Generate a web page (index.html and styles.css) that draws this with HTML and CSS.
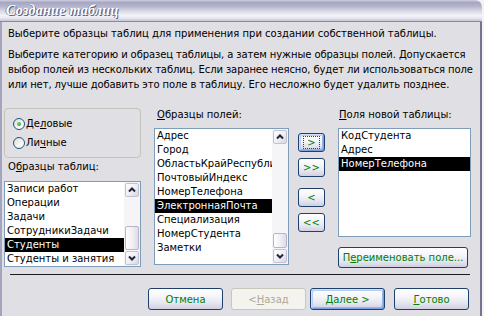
FILE: index.html
```html
<!DOCTYPE html>
<html lang="ru">
<head>
    <meta charset="UTF-8">
    <title>Создание таблиц</title>
    <link rel="stylesheet" href="styles.css">
</head>
<body>
    <div class="window">
        <div class="titlebar">
            <span class="title">Создание таблиц</span>
        </div>

        <div class="frame">
            <p class="intro">Выберите образцы таблиц для применения при создании собственной таблицы.</p>
            <p class="hint">
                Выберите категорию и образец таблицы, а затем нужные образцы полей. Допускается<br>
                выбор полей из нескольких таблиц. Если заранее неясно, будет ли использоваться поле<br>
                или нет, лучше добавить это поле в таблицу. Его несложно будет удалить позднее.
            </p>

            <div class="picker">
                <!-- category + sample tables -->
                <div class="col col-samples">
                    <div class="group">
                        <div class="radio-row">
                            <span class="radio checked"></span>
                            <span>Де<u>л</u>овые</span>
                        </div>
                        <div class="radio-row">
                            <span class="radio"></span>
                            <span>Ли<u>ч</u>ные</span>
                        </div>
                    </div>
                    <div class="label label-tables">О<u>б</u>разцы таблиц:</div>
                    <div class="listbox lb-tables">
                        <ul class="items">
                            <li>Записи работ</li>
                            <li>Операции</li>
                            <li>Задачи</li>
                            <li>СотрудникиЗадачи</li>
                            <li class="selected">Студенты</li>
                            <li>Студенты и занятия</li>
                        </ul>
                        <div class="scrollbar">
                            <div class="sb-btn">
                                <svg width="12" height="12" viewBox="0 0 12 12"><polyline points="3,7.5 6,4.5 9,7.5" fill="none" stroke="#22223a" stroke-width="2"/></svg>
                            </div>
                            <div class="sb-track"></div>
                            <div class="sb-thumb thumb-tables"></div>
                            <div class="sb-btn">
                                <svg width="12" height="12" viewBox="0 0 12 12"><polyline points="3,4.5 6,7.5 9,4.5" fill="none" stroke="#22223a" stroke-width="2"/></svg>
                            </div>
                        </div>
                    </div>
                </div>

                <!-- sample fields -->
                <div class="col col-fields">
                    <div class="label label-fields"><u>О</u>бразцы полей:</div>
                    <div class="listbox lb-fields">
                        <ul class="items">
                            <li>Адрес</li>
                            <li>Город</li>
                            <li>ОбластьКрайРеспублика</li>
                            <li>ПочтовыйИндекс</li>
                            <li>НомерТелефона</li>
                            <li class="selected">ЭлектроннаяПочта</li>
                            <li>Специализация</li>
                            <li>НомерСтудента</li>
                            <li>Заметки</li>
                        </ul>
                        <div class="scrollbar">
                            <div class="sb-btn">
                                <svg width="12" height="12" viewBox="0 0 12 12"><polyline points="3,7.5 6,4.5 9,7.5" fill="none" stroke="#22223a" stroke-width="2"/></svg>
                            </div>
                            <div class="sb-track"></div>
                            <div class="sb-thumb thumb-fields"></div>
                            <div class="sb-btn">
                                <svg width="12" height="12" viewBox="0 0 12 12"><polyline points="3,4.5 6,7.5 9,4.5" fill="none" stroke="#22223a" stroke-width="2"/></svg>
                            </div>
                        </div>
                    </div>
                </div>

                <!-- move buttons -->
                <div class="col col-move">
                    <button class="btn btn-move default"><span class="focus">&gt;</span></button>
                    <button class="btn btn-move">&gt;&gt;</button>
                    <button class="btn btn-move gap">&lt;</button>
                    <button class="btn btn-move">&lt;&lt;</button>
                </div>

                <!-- new table fields -->
                <div class="col col-new">
                    <div class="label label-new"><u>П</u>оля новой таблицы:</div>
                    <div class="listbox lb-new">
                        <ul class="items">
                            <li>КодСтудента</li>
                            <li>Адрес</li>
                            <li class="selected">НомерТелефона</li>
                        </ul>
                    </div>
                    <button class="btn btn-rename">П<u>е</u>реименовать поле...</button>
                </div>
            </div>

            <div class="separator"></div>

            <div class="footer">
                <button class="btn btn-wide">Отмена</button>
                <button class="btn btn-wide disabled">&lt; <u>Н</u>азад</button>
                <button class="btn btn-wide default"><span><u>Д</u>алее &gt;</span></button>
                <button class="btn btn-wide"><u>Г</u>отово</button>
            </div>
        </div>
    </div>
</body>
</html>
```

FILE: styles.css
```css
* {
    margin: 0;
    padding: 0;
    box-sizing: border-box;
}

body {
    background: #f3f3f5;
    font-family: "DejaVu Sans", sans-serif;
    font-size: 10px;
    color: #000;
}

u {
    text-decoration: underline;
    text-underline-offset: 1px;
}

.window {
    width: 482px;
    height: 316px;
    display: flex;
    flex-direction: column;
}

.titlebar {
    height: 22px;
    padding-left: 6px;
    display: flex;
    align-items: center;
    border-radius: 0 7px 0 0;
    border-bottom: 1px solid #8a8aa6;
    background: linear-gradient(to bottom, #cfcfe0 0%, #a6a6c2 12%, #b4b4cc 30%, #dcdce8 55%, #f4f4f8 75%, #e4e4ee 88%, #c4c4d6 100%);
}

.title {
    font-family: "Liberation Serif", serif;
    font-style: italic;
    font-weight: bold;
    font-size: 14px;
    color: #fff;
    letter-spacing: 0.3px;
    text-shadow: 1px 1px 0 #5c5c7c, -1px 0 0 #8c8cab;
}

.frame {
    flex: 1;
    background: #e0dfe3;
    border-left: 2px solid #a4a4be;
    border-right: 2px solid #74748f;
    padding-top: 5px;
}

.intro {
    padding-left: 6px;
    line-height: 13px;
    white-space: nowrap;
}

.hint {
    margin-top: 7px;
    padding-left: 6px;
    line-height: 15px;
    letter-spacing: -0.1px;
    white-space: nowrap;
}

/* ---- picker area ---- */

.picker {
    display: flex;
    margin-top: 16px;
    padding-left: 2px;
}

.col {
    display: flex;
    flex-direction: column;
}

.col-samples {
    width: 137px;
}

.col-fields {
    width: 135px;
    margin-left: 13px;
}

.col-move {
    width: 27px;
    margin-left: 9px;
    padding-top: 25px;
}

.col-new {
    width: 133px;
    margin-left: 13px;
}

.group {
    height: 50px;
    border: 1px solid #c6c4b6;
    border-radius: 4px;
    padding: 5px 0 0 8px;
}

.radio-row {
    height: 19px;
    display: flex;
    align-items: center;
    gap: 1px;
}

.radio {
    position: relative;
    width: 12px;
    height: 12px;
    border-radius: 50%;
    border: 1px solid #1d5281;
    background: linear-gradient(135deg, #dcdcd6 0%, #f6f6f4 60%, #ffffff 100%);
}

.radio.checked::after {
    content: '';
    position: absolute;
    top: 3px;
    left: 3px;
    width: 4px;
    height: 4px;
    border-radius: 50%;
    background: radial-gradient(circle at 35% 35%, #6edc6a, #21a121);
}

.label {
    line-height: 13px;
    white-space: nowrap;
}

.label-tables {
    margin-top: 2px;
    padding-left: 4px;
}

.label-fields {
    padding-left: 3px;
}

.label-new {
    padding-left: 1px;
}

/* ---- list boxes ---- */

.listbox {
    display: flex;
    background: #fff;
    border: 1px solid #7f9db9;
    overflow: hidden;
}

.lb-tables {
    height: 86px;
    margin-top: 8px;
}

.lb-fields {
    height: 137px;
    margin-top: 7px;
}

.lb-new {
    height: 109px;
    margin-top: 7px;
}

.items {
    flex: 1;
    min-width: 0;
    list-style: none;
    overflow: hidden;
}

.items li {
    height: 14px;
    line-height: 14px;
    padding-left: 2px;
    white-space: nowrap;
    overflow: hidden;
}

.items li.selected {
    background: #000;
    color: #fff;
}

.scrollbar {
    width: 16px;
    flex-shrink: 0;
    padding: 1px;
    display: flex;
    flex-direction: column;
    background: #f5f5f7;
}

.sb-btn {
    width: 14px;
    height: 14px;
    display: flex;
    align-items: center;
    justify-content: center;
    border: 1px solid #c2c2d2;
    border-radius: 2px;
    background: linear-gradient(135deg, #ffffff 0%, #eeeef4 55%, #d6d6e2 100%);
}

.sb-track {
    flex: 1;
}

.sb-thumb {
    width: 14px;
    margin-bottom: 1px;
    border: 1px solid #b6b6c8;
    border-radius: 2px;
    background: linear-gradient(to right, #ffffff 0%, #f0f0f5 50%, #dcdce6 100%);
}

.thumb-tables {
    height: 24px;
}

.thumb-fields {
    height: 15px;
}

/* ---- buttons ---- */

.btn {
    display: flex;
    align-items: center;
    justify-content: center;
    font-family: inherit;
    font-size: 10px;
    color: #008000;
    border: 1px solid #1f3f6c;
    border-radius: 3px;
    background: linear-gradient(to bottom, #ffffff 0%, #f6f6fa 35%, #e6e6f0 70%, #cfcfe0 100%);
    white-space: nowrap;
}

.btn.default {
    box-shadow: inset 1px 1px 0 #cee0fb, inset -1px -1px 0 #7b9ee6, inset 2px 2px 0 #b8cff4, inset -2px -2px 0 #98b6ec;
}

.btn.disabled {
    color: #aca899;
    border-color: #c9c7ba;
    background: #f4f3ee;
}

.btn-move {
    width: 27px;
    height: 19px;
    margin-bottom: 6px;
}

.btn-move.gap {
    margin-top: 5px;
}

.focus {
    border: 1px dotted #6d1f5f;
    padding: 0 3px;
    line-height: 11px;
}

.btn-rename {
    width: 130px;
    height: 21px;
    margin-top: 10px;
}

/* ---- bottom ---- */

.separator {
    margin: 6px 0 0 8px;
    width: 460px;
    border-top: 1px solid #1c1c1c;
}

.footer {
    display: flex;
    margin-top: 13px;
    padding-left: 146px;
}

.btn-wide {
    width: 75px;
    height: 22px;
}

.footer .btn-wide + .btn-wide {
    margin-left: 8px;
}

.footer .btn-wide.default {
    margin-left: 4px;
}

.footer .btn-wide:last-child {
    margin-left: 9px;
}
```
